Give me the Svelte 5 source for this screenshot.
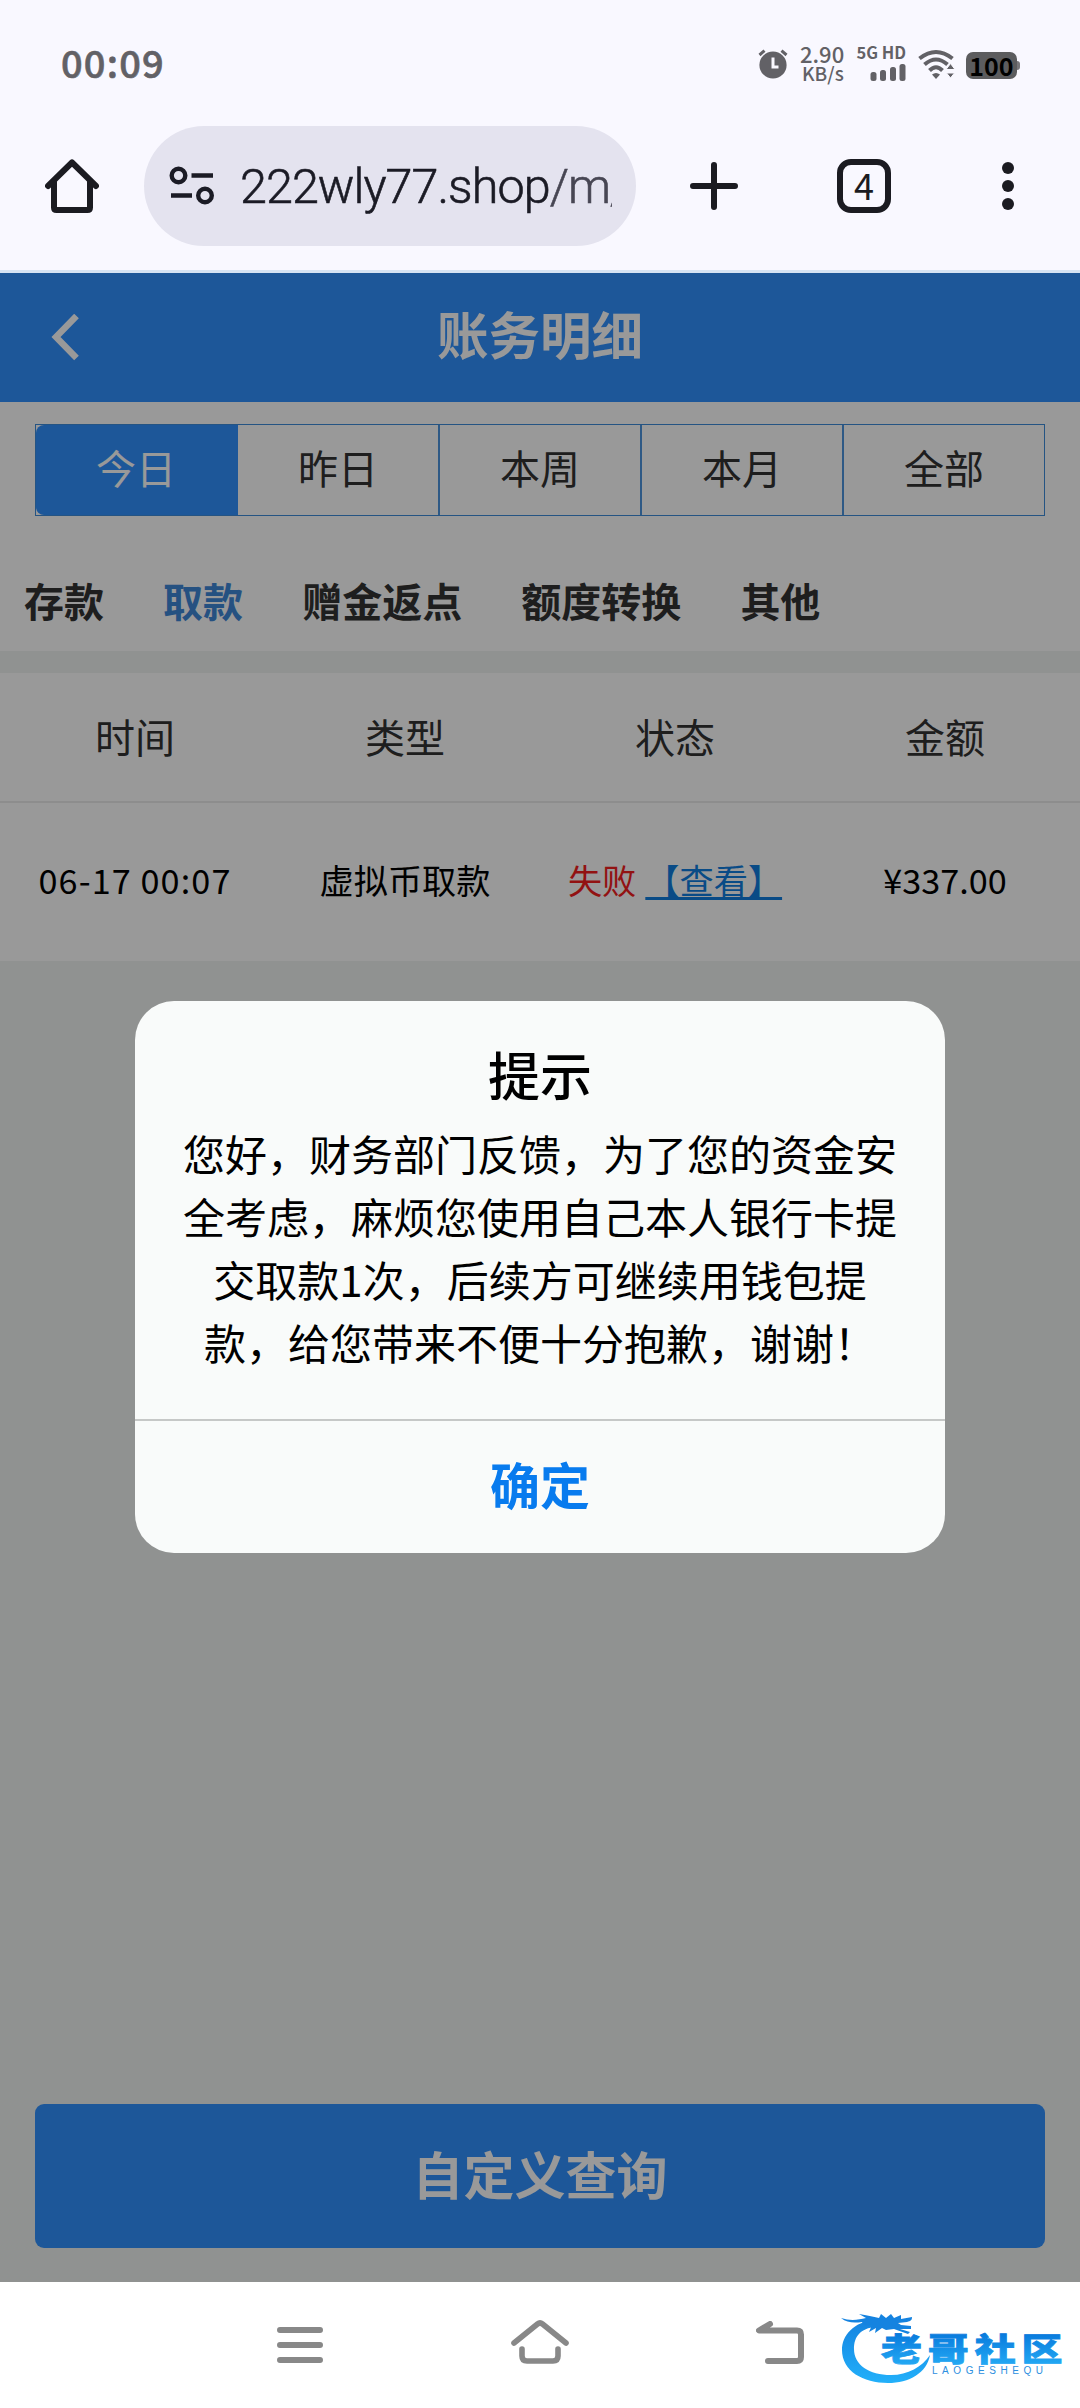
<script>
  const ranges = ['今日', '昨日', '本周', '本月', '全部'];
  const types = ['存款', '取款', '赠金返点', '额度转换', '其他'];
  const columns = ['时间', '类型', '状态', '金额'];

  const records = [
    { time: '06-17 00:07', type: '虚拟币取款', status: '失败', amount: '¥337.00' }
  ];

  let range = $state('今日');
  let type = $state('取款');
</script>

<div class="phone">
  <header class="browser">
    <div class="status">
      <span class="clock">00:09</span>
      <div class="indicators">
        <svg class="alarm" width="30" height="30" viewBox="0 0 30 30">
          <circle cx="15" cy="16" r="13.6" fill="#626166" />
          <path d="M1.5 6 6.5 1.6M28.5 6 23.5 1.6" stroke="#626166" stroke-width="3" />
          <path d="M15 8.500v9.500h5.500" fill="none" stroke="#f9f8ff" stroke-width="3" />
        </svg>
        <div class="speed">
          <span>2.90</span>
          <span class="unit">KB/s</span>
        </div>
        <div class="signal">
          <span>5G HD</span>
          <svg width="36" height="17" viewBox="0 0 36 17" fill="#626166">
            <rect x="0.500" y="8" width="6" height="9" rx="2.500" />
            <rect x="10" y="6" width="6" height="11" rx="2.500" />
            <rect x="20" y="3" width="6" height="14" rx="2.500" />
            <rect x="29.500" y="0" width="6" height="17" rx="2.500" />
          </svg>
        </div>
        <svg class="wifi" width="37" height="30" viewBox="0 0 37 30">
          <g fill="none" stroke="#626166" stroke-width="4">
            <path d="M1.500 9.500Q18 -3.500 34.500 9.500" />
            <path d="M6.500 15.500Q18 5.500 29.500 15.500" />
            <path d="M11.500 21.500Q18 15 24.500 21.500" />
          </g>
          <path d="M14 25.500Q18 22.500 22 25.500L18 30Z" fill="#626166" />
          <path d="M32.500 14.500 37 20.500H28ZM32.500 29 28.500 24h8Z" fill="#626166" stroke="#f9f8ff" stroke-width="1" />
        </svg>
        <div class="battery">100</div>
      </div>
    </div>

    <div class="toolbar">
      <svg class="home" width="54" height="54" viewBox="0 0 54 54" fill="none" stroke="#1b1b21" stroke-width="6" stroke-linecap="round" stroke-linejoin="round">
        <path d="M3 27 27 3.500 51 27" />
        <path d="M9 23V48.500Q9 51 11.500 51H42.500Q45 51 45 48.500V23" />
      </svg>
      <div class="address">
        <svg width="46" height="40" viewBox="0 0 46 40" fill="none" stroke="#1b1b25" stroke-width="4.400">
          <circle cx="9.500" cy="9.500" r="6.800" />
          <path d="M22.500 9.500H44M2 29.500H23" />
          <circle cx="36" cy="29.500" r="6.800" />
        </svg>
        <div class="url">222wly77.shop<span>/m/</span></div>
      </div>
      <svg class="plus" width="48" height="48" viewBox="0 0 48 48" stroke="#1b1b21" stroke-width="6" stroke-linecap="round">
        <path d="M24 3V45M3 24H45" />
      </svg>
      <div class="tabcount">4</div>
      <svg class="more" width="12" height="48" viewBox="0 0 12 48" fill="#1b1b21">
        <circle cx="6" cy="6" r="6" />
        <circle cx="6" cy="24" r="6" />
        <circle cx="6" cy="42" r="6" />
      </svg>
    </div>
  </header>

  <main class="page">
    <div class="title">
      <svg width="30" height="48" viewBox="0 0 30 48" fill="none" stroke="#fff" stroke-width="6.500">
        <path d="M26.500 2 6 23 26.500 44" />
      </svg>
      <h1>账务明细</h1>
    </div>

    <div class="filters">
      <div class="ranges">
        {#each ranges as item}
          <button class:active={range === item} onclick={() => (range = item)}>{item}</button>
        {/each}
      </div>
      <div class="types">
        {#each types as item}
          <button class:active={type === item} onclick={() => (type = item)}>{item}</button>
        {/each}
      </div>
    </div>

    <div class="table">
      <div class="row head">
        {#each columns as column}
          <span>{column}</span>
        {/each}
      </div>
      {#each records as record}
        <div class="row">
          <span class="time">{record.time}</span>
          <span>{record.type}</span>
          <span class="state"><em>{record.status}</em><a href="#detail">【查看】</a></span>
          <span>{record.amount}</span>
        </div>
      {/each}
    </div>

    <button class="query">自定义查询</button>

    <div class="mask">
      <div class="dialog">
        <div class="body">
          <h2>提示</h2>
          <p>您好，财务部门反馈，为了您的资金安全考虑，麻烦您使用自己本人银行卡提交取款1次，后续方可继续用钱包提款，给您带来不便十分抱歉，谢谢！</p>
        </div>
        <button class="ok">确定</button>
      </div>
    </div>
  </main>

  <nav class="system">
    <svg width="46" height="36" viewBox="0 0 46 36" stroke="#888" stroke-width="6" stroke-linecap="round">
      <path d="M3 3H43M3 18H43M3 33H43" />
    </svg>
    <svg class="nav-home" width="58" height="44" viewBox="0 0 58 44" fill="none" stroke="#888" stroke-width="5.600" stroke-linecap="round" stroke-linejoin="round">
      <path d="M3 23 26.500 4Q29 2 31.500 4L55 23" />
      <path d="M11 29V36Q11 41 16 41H42Q47 41 47 36V29" />
    </svg>
    <svg class="nav-back" width="48" height="43" viewBox="0 0 48 43" fill="none" stroke="#888" stroke-width="6" stroke-linecap="round" stroke-linejoin="round">
      <path d="M14 3 3 9.500H41Q45 9.500 45 13.500V36Q45 40 41 40H12" />
    </svg>
    <svg class="logo" width="226" height="74" viewBox="0 0 226 74">
      <defs>
        <linearGradient id="ring" x1="0" y1="0" x2="0" y2="1">
          <stop offset="0" stop-color="#1583e0" />
          <stop offset="1" stop-color="#22b0fa" />
        </linearGradient>
        <linearGradient id="word" x1="0" y1="0" x2="0" y2="1">
          <stop offset="0.200" stop-color="#0879dc" />
          <stop offset="1" stop-color="#28b2f8" />
        </linearGradient>
      </defs>
      <path fill="url(#ring)" d="M34 8C14 10 2 23 2 38C2 59 23 71 48 71C69 71 87 61 90 43C82 55 68 63 51 63C29 63 14 53 14 37C14 25 20 16 36 15Z" />
      <path fill="#1583e0" d="M1 6C10 9 18 8 26 6L19 2C27 3 33 5 39 6L41 2 46 6 51 2 54 6 61 3 61 7 72 5C72 8 71 9 67 10L58 11 61 13 71 14 71 17 60 17 70 20 68 22 54 17 46 18 42 16 35 21 36 16 29 20 32 13C26 14 23 13 22 10C14 11 7 11 1 6Z" />
      <text class="logo-name" transform="translate(41 49) scale(1.280 1)" fill="url(#word)" stroke="url(#word)">老哥社区</text>
      <text class="logo-sub" x="92" y="62" textLength="111">LAOGESHEQU</text>
    </svg>
  </nav>
</div>

<style>
:global(body) {
  margin: 0;
  background: #fff;
}

.phone {
  width: 1080px;
  height: 2408px;
  display: flex;
  flex-direction: column;
  overflow: hidden;
  font-family: "Noto Sans CJK SC", "Noto Sans", sans-serif;
}

button {
  border: 0;
  padding: 0;
  background: none;
  font-family: inherit;
  color: inherit;
}

h1, h2, p {
  margin: 0;
}

svg {
  display: block;
  flex: none;
}

/* browser bar */
.browser {
  height: 270px;
  flex: none;
  background: #f9f8ff;
}

.status {
  height: 126px;
  padding: 2px 60px 0 61px;
  box-sizing: border-box;
  display: flex;
  align-items: center;
  justify-content: space-between;
  color: #626166;
}

.clock {
  padding-bottom: 6px;
  font-size: 38px;
  font-weight: 500;
  letter-spacing: 1.2px;
  -webkit-text-stroke: 0.6px currentColor;
}

.indicators {
  display: flex;
  align-items: center;
}

.speed {
  margin: -3px 0 0 12px;
  width: 48px;
  display: flex;
  flex-direction: column;
  font-size: 22px;
  font-weight: 500;
  line-height: 19px;
}

.speed .unit {
  padding-left: 2px;
  font-size: 19px;
}

.signal {
  margin: -2px 0 0 8px;
  width: 50px;
  display: flex;
  flex-direction: column;
  align-items: flex-end;
  gap: 5px;
  font-size: 16.500px;
  font-weight: 700;
  line-height: 13px;
  white-space: nowrap;
}

.wifi {
  margin-left: 12px;
}

.battery {
  position: relative;
  margin: 2px 3px 0 11px;
  width: 51px;
  height: 27px;
  border-radius: 7px;
  background: #5c5c5e;
  color: #000;
  font-size: 25px;
  font-weight: 700;
  line-height: 26px;
  text-align: center;
}

.battery::after {
  content: '';
  position: absolute;
  right: -3px;
  top: 9px;
  width: 3px;
  height: 9px;
  border-radius: 0 3px 3px 0;
  background: #77767a;
}

.toolbar {
  height: 120px;
  display: flex;
  align-items: center;
}

.home {
  margin-left: 45px;
}

.address {
  margin-left: 45px;
  width: 492px;
  height: 120px;
  padding: 0 24px 0 25px;
  box-sizing: border-box;
  border-radius: 60px;
  background: #e4e3ef;
  display: flex;
  align-items: center;
}

.url {
  margin-left: 25px;
  flex: 1;
  overflow: hidden;
  white-space: nowrap;
  font-family: Roboto, sans-serif;
  font-size: 48.500px;
  font-weight: 300;
  letter-spacing: -0.950px;
  -webkit-text-stroke: 0.6px currentColor;
  color: #1b1b25;
}

.url span {
  color: #474653;
}

.plus {
  margin-left: 54px;
}

.tabcount {
  margin-left: 99px;
  width: 54px;
  height: 54px;
  box-sizing: border-box;
  border: 6px solid #1b1b21;
  border-radius: 14px;
  font-size: 36px;
  line-height: 39px;
  text-align: center;
  color: #1b1b21;
}

.more {
  margin-left: 111px;
}

/* page */
.page {
  position: relative;
  height: 2012px;
  flex: none;
  display: flex;
  flex-direction: column;
  background: #f0f4f2;
}

.title {
  height: 132px;
  box-sizing: border-box;
  border-top: 3px solid #d6e4f4;
  flex: none;
  display: flex;
  align-items: center;
  justify-content: center;
  background: #3191ff;
  color: #fff;
}

.title svg {
  margin: 0 357px 0 -387px;
}

.title h1 {
  padding-bottom: 9px;
  font-size: 51.500px;
  font-weight: 700;
  line-height: 60px;
}

.filters {
  height: 249px;
  box-sizing: border-box;
  padding-top: 22px;
  background: #fff;
}

.ranges {
  margin: 0 35px;
  height: 92px;
  box-sizing: border-box;
  border: 1px solid #3f8cdb;
  display: flex;
}

.ranges button {
  flex: 1;
  border-right: 2px solid #4d94de;
  padding-bottom: 6px;
  font-size: 40px;
  line-height: 84px;
  color: #333;
}

.ranges button:last-child {
  border-right: 0;
}

.ranges button.active {
  background: #3191ff;
  border-color: #3191ff;
  border-radius: 8px 0 0 8px;
  color: #fff;
}

.types {
  margin: 54px 0 0 24px;
  display: flex;
  gap: 59.100px;
}

.types button {
  font-size: 40px;
  font-weight: 700;
  line-height: 60px;
  color: #333;
}

.types button.active {
  color: #3f87d8;
}

.table {
  margin-top: 22px;
  background: #fff;
}

.row {
  height: 158px;
  box-sizing: border-box;
  padding-bottom: 6px;
  display: flex;
  align-items: center;
  font-size: 34.200px;
  color: #000;
}

.row > span {
  width: 270px;
  text-align: center;
  white-space: nowrap;
}

.row.head {
  height: 130px;
  padding-bottom: 3px;
  border-bottom: 2px solid #ececec;
  font-size: 40px;
  color: #333;
}

.row .time {
  letter-spacing: 1.100px;
}

.state {
  display: flex;
  justify-content: center;
  gap: 9px;
}

.state em {
  font-style: normal;
  color: #f41e1e;
}

.state a {
  color: #107de0;
  text-decoration: underline;
  text-decoration-thickness: 3px;
  text-underline-offset: 3px;
  text-decoration-skip-ink: none;
}

.query {
  margin: auto 35px 34px;
  height: 144px;
  padding-bottom: 6px;
  flex: none;
  border-radius: 9px;
  background: #3191ff;
  color: #fff;
  font-size: 51px;
  font-weight: 700;
}

/* dialog */
.mask {
  position: absolute;
  top: 3px;
  left: 0;
  right: 0;
  bottom: 0;
  background: rgba(0, 0, 0, 0.4);
  display: flex;
  justify-content: center;
  align-items: flex-start;
}

.dialog {
  margin-top: 728px;
  width: 810px;
  height: 552px;
  border-radius: 39px;
  overflow: hidden;
  background: #f9fbfa;
  color: #000;
}

.body {
  height: 420px;
  box-sizing: border-box;
  padding: 38px 44px 0;
  border-bottom: 2px solid #c6c8c7;
  text-align: center;
}

.body h2 {
  font-size: 52px;
  font-weight: 500;
  line-height: 70px;
}

.body p {
  margin-top: 12px;
  font-size: 42px;
  line-height: 63px;
}

.ok {
  display: block;
  width: 100%;
  height: 130px;
  padding-bottom: 6px;
  font-size: 50px;
  font-weight: 700;
  color: #087bee;
}

/* system navigation */
.system {
  flex: 1;
  display: flex;
  align-items: flex-start;
  padding: 45px 0 0 277px;
  background: #fff;
}

.nav-home {
  margin: -7px 0 0 188px;
}

.nav-back {
  margin: -6px 0 0 187px;
}

.logo {
  margin: -15px 0 0 36px;
}

.logo-name {
  font-size: 32px;
  font-weight: 900;
  letter-spacing: 4.600px;
  stroke-width: 0.8px;
}

.logo-sub {
  font-family: "Liberation Sans", sans-serif;
  font-size: 10px;
  fill: #2d8fe0;
}
</style>
